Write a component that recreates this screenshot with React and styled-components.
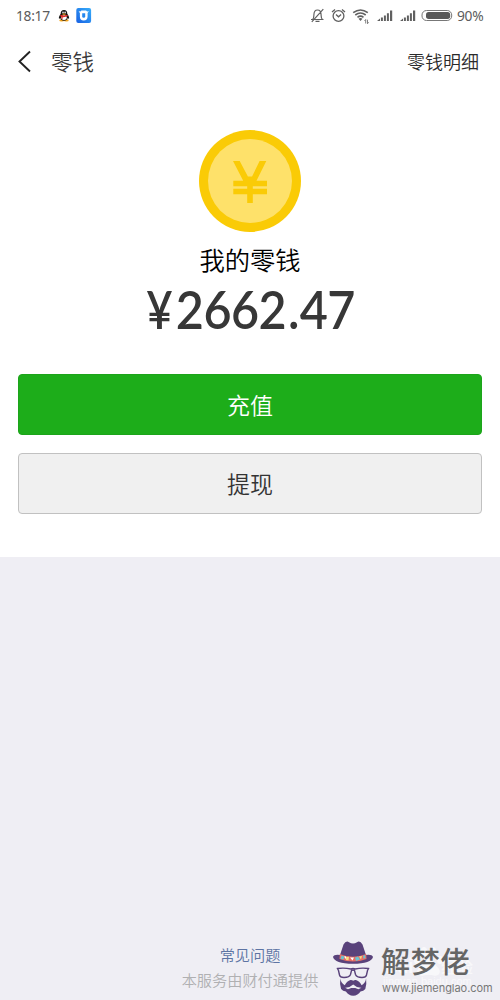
import React from 'react';
import styled, { createGlobalStyle } from 'styled-components';

const Global = createGlobalStyle`
  * { box-sizing: border-box; }
  body { margin: 0; background: #efeef4; font-family: "Noto Sans", "Noto Sans CJK SC", sans-serif; }
`;

const Screen = styled.div`
  width: 500px;
  height: 1000px;
  display: flex;
  flex-direction: column;
  overflow: hidden;
  position: relative;
  background: #efeef4;
`;

const StatusBar = styled.header`
  height: 31px;
  flex: none;
  display: flex;
  align-items: center;
  justify-content: space-between;
  padding: 0 16px;
  background: #fff;
  color: #5c5c5c;
`;

const StatusGroup = styled.div`
  display: flex;
  align-items: center;
  height: 31px;
`;

const StatusText = styled.span`
  font: 400 ${(p) => p.$size}px/31px "Noto Sans", sans-serif;
  margin-left: ${(p) => p.$gap || 0}px;
  letter-spacing: -0.3px;
  width: ${(p) => p.$width}px;
  white-space: nowrap;
`;

const Glyph = styled.svg`
  display: block;
  flex: none;
  margin-left: ${(p) => p.$gap || 0}px;
`;

const NavBar = styled.nav`
  height: 61px;
  flex: none;
  display: flex;
  align-items: center;
  padding: 0 21px 0 16px;
  background: #fff;
`;

const NavTitle = styled.h1`
  margin: 0 auto 0 18px;
  padding-bottom: 2px;
  font: 350 21.5px/59px "Noto Sans CJK SC", sans-serif;
  color: #3a3a3a;
`;

const NavLink = styled.span`
  font: 350 18px/59px "Noto Sans CJK SC", sans-serif;
  color: #2a2a2a;
`;

const Wallet = styled.main`
  height: 465px;
  flex: none;
  display: flex;
  flex-direction: column;
  align-items: center;
  padding: 38px 18px 0;
  background: #fff;
`;

const Label = styled.div`
  margin-top: 8px;
  font: 350 25.3px/38px "Noto Sans CJK SC", sans-serif;
  color: #000;
`;

const Amount = styled.div`
  height: 60px;
  margin-top: 2px;
  padding-left: 1px;
  display: flex;
  font: 600 51px/60px Lato, sans-serif;
  letter-spacing: -0.6px;
  transform: scaleX(0.95);
  color: #373737;
  white-space: nowrap;
`;

const Currency = styled.span`
  transform: scaleX(0.94);
  margin-right: 3px;
`;

const Point = styled.span`
  margin: 0 1px 0 2px;
`;

const Button = styled.button`
  width: 464px;
  height: 61px;
  flex: none;
  margin: ${(p) => (p.$primary ? '34px' : '18px')} 0 0;
  padding: 0 0 2px;
  border: ${(p) => (p.$primary ? '1px solid #1da41b' : '1.5px solid #c1c1c1')};
  border-radius: 4px;
  background: ${(p) => (p.$primary ? '#1dad1a' : '#f0f0f0')};
  color: ${(p) => (p.$primary ? '#fff' : '#333')};
  font: 350 23px/34px "Noto Sans CJK SC", sans-serif;
`;

const Footer = styled.footer`
  margin-top: auto;
  padding-bottom: 8px;
  display: flex;
  flex-direction: column;
  align-items: center;
  font: 350 15.2px/25px "Noto Sans CJK SC", sans-serif;
  color: #b0b0b2;
`;

const HelpLink = styled.a`
  color: #5d74a3;
`;

const Watermark = styled.aside`
  position: absolute;
  left: 332px;
  top: 940px;
  display: flex;
  width: 166px;
  height: 58px;
`;

const GhostMark = styled.svg`
  position: absolute;
  left: 50px;
  top: 5px;
`;

const Brand = styled.div`
  position: relative;
  margin-left: 7px;
  color: #656565;
`;

const BrandName = styled.div`
  font: 500 29px/41px "Noto Sans CJK SC", sans-serif;
  letter-spacing: 0.7px;
  height: 41px;
  white-space: nowrap;
`;

const BrandUrl = styled.div`
  padding-left: 1px;
  font: 400 11px/14px Inter, sans-serif;
  letter-spacing: -0.05px;
  color: #777;
`;

function PenguinIcon() {
  return (
    <Glyph $gap={8} width="12" height="13" viewBox="0 0 13 14">
      <ellipse cx="4" cy="12.3" rx="2.6" ry="1.2" fill="#f6a51b" />
      <ellipse cx="9" cy="12.3" rx="2.6" ry="1.2" fill="#f6a51b" />
      <path d="M6.5 1C4 1 2.9 2.8 2.9 5 1.800 6.500.6 8.600 1 10.300c.4.500 1-.3 1.400-.6.500 1.900 2 2.900 4.100 2.900s3.600-1 4.100-2.900c.4.300 1 1.100 1.400.6.4-1.700-.8-3.800-1.900-5.300 0-2.200-1.100-4-3.600-4z" fill="#151515" />
      <ellipse cx="6.500" cy="9.300" rx="3" ry="2.700" fill="#fff" />
      <ellipse cx="5.400" cy="3.700" rx=".8" ry="1.100" fill="#fff" />
      <ellipse cx="7.700" cy="3.700" rx=".8" ry="1.100" fill="#fff" />
      <ellipse cx="6.500" cy="5.500" rx="2" ry=".6" fill="#f6a51b" />
      <path d="M2.700 6.300q3.800 1.800 7.600 0l.3 1.300q-3 1.500-5.500 1.100v1.700H3.700V8.300l-1.300-.7z" fill="#e62a22" />
    </Glyph>
  );
}

function AppIcon() {
  return (
    <Glyph $gap={6} width="16" height="16" viewBox="0 0 16 16">
      <defs>
        <linearGradient id="app" x1="0" y1="1" x2="1" y2="0">
          <stop stopColor="#1761e3" />
          <stop offset="1" stopColor="#37adfa" />
        </linearGradient>
      </defs>
      <rect x=".3" y=".1" width="14.800" height="14.800" rx="2" fill="url(#app)" />
      <path d="M2.600 3.300l1.800.2 1-.9h4.700l1 .9 1.800-.2-1.300 1.600v3.700q0 3.900-3.900 3.900T3.900 8.600V4.900z" fill="#fff" />
      <path d="M6.200 5.200h3v3.200q0 1.400-1.500 1.400T6.200 8.400z" fill="#2588ee" />
    </Glyph>
  );
}

function MutedBellIcon() {
  return (
    <Glyph width="15" height="16" viewBox="0 0 15 16" fill="none" stroke="#606060" strokeWidth="1.200">
      <path d="M1 11.500h12.500M2.700 11.300c1.200-1 1.100-2.300 1.200-4.600C4 3.800 5.200 2 7.500 2s3.500 1.800 3.600 4.700c.1 2.300 0 3.600 1.200 4.600M5.500 13.300h4M13.300 1.200L1.800 13.900" />
    </Glyph>
  );
}

function AlarmIcon() {
  return (
    <Glyph $gap={6} width="15" height="16" viewBox="0 0 15 16" fill="none" stroke="#606060" strokeWidth="1.300">
      <circle cx="7.500" cy="8" r="5.400" />
      <path d="M5 6.500l2.500 2.300 2.600-2.300M1 4l3-2.500M14 4l-3-2.500" />
    </Glyph>
  );
}

function WifiIcon() {
  return (
    <Glyph $gap={6} width="18" height="18" viewBox="0 0 18 18" fill="none" stroke="#606060" strokeWidth="1.600">
      <path d="M1.200 5.700q7.300-5.400 14.600 0M3.300 8q5.200-4.100 10.400 0M5.500 10.300q3-2.400 6 0" />
      <path d="M6.500 11.700q2-1.300 4 0l-2 2.200z" fill="#606060" stroke="none" />
      <path d="M13.700 16.500v-4l-1.200 1.400M15.500 12.700v4l1.200-1.400" strokeWidth=".8" />
    </Glyph>
  );
}

function SignalIcon({ gap }) {
  return (
    <Glyph $gap={gap} width="16" height="12" viewBox="0 0 16 12" fill="#606060">
      <path d="M0 11l3-2.600V11zM3.900 7.600h2V11h-2zM6.900 5.400h2V11h-2zM9.900 3.200h2V11h-2zM13 .4h2.200V11H13z" />
    </Glyph>
  );
}

function BatteryIcon() {
  return (
    <Glyph $gap={5} width="32" height="12" viewBox="0 0 32 12">
      <rect x="1" y=".5" width="29.700" height="10" rx="4.500" fill="#fff" stroke="#777" />
      <rect x="5" y="2" width="24.200" height="7" rx="2.700" fill="#585858" />
    </Glyph>
  );
}

function Coin() {
  return (
    <Glyph width="102" height="102" viewBox="0 0 102 102">
      <circle cx="51" cy="51" r="51" fill="#facb06" />
      <circle cx="51" cy="51" r="42" fill="#fee16a" />
      <path d="M34 31h6.700l8.200 15.500h4.200L60.600 31h6.700L57.500 50.700H68v5.600H53.800v2.500H68v5.400H53.800V73h-5.600v-8.800H34.300v-5.400h13.900v-2.500H34.300v-5.600h9.900z" fill="#facb06" />
    </Glyph>
  );
}

function GentlemanLogo() {
  return (
    <Glyph width="42" height="56" viewBox="0 0 42 56">
      <path d="M8 15L11.500 4.500Q14 .3 17 2.200q4 2.500 8 0 3-1.900 5.500 2.300L34 15q6-.8 7 2-1.500 6.500-20 6.800Q2.500 23.500 1 17q1-2.800 7-2z" fill="#59427b" />
      <path d="M7.800 14q13 5.600 26.400 0l.3 5q-13.300 5-27 0z" fill="#e66d65" />
      <path d="M9.500 15.500l3 1-1 3-3-.4zM23 17.500l3-1 2 3-4 1.500zM31 15.700l2-.7.500 3-2 .7z" fill="#69c3cf" />
      <path d="M14 17l3-.2-.5 3.500-2.500-.3zM27 16.500l3-.6-1 3.500z" fill="#f6dd82" />
      <path d="M18 17.500l4 .1-1.500 3zM12 16.500l2-.3v3z" fill="#fff" />
      <path d="M5.500 28.500q7-1 13.300.5 2.200-1 4.400 0 6.300-1.500 13.300-.5l-1 2-1 4.500q-.5 2.500-4.500 2.500-5.500 0-6.500-3l-1-4q-1.500-.7-3 0l-1 4q-1 3-6.500 3-4 0-4.500-2.500l-1-4.500z" fill="none" stroke="#59427b" strokeWidth="1.400" />
      <path d="M8.300 38.500q.7 4.700 4.500 6.800 2.200-4.500 5.700-5.300 1.500-.2 2.700.8 1.200-1 2.700-.8 3.500.8 5.700 5.300 3.800-2.100 4.500-6.800.8 5.500-.8 10.500-1.700 2-4.800 2.500-2.500 4-7.300 4.300-4.800-.3-7.300-4.300-3.100-.5-4.800-2.500-1.600-5-.8-10.500z" fill="#59427b" />
      <path d="M13 47.800q4.500.2 8.200-3.300 3.700 3.500 8.200 3.300l-3 1.500-3.200-1.300h-4l-3.200 1.300z" fill="#efeef4" />
    </Glyph>
  );
}

function PawMark() {
  return (
    <GhostMark width="112" height="50" viewBox="0 0 112 50" fill="#fff" opacity=".6">
      <text x="3" y="28" fontFamily="Lato" fontWeight="700" fontSize="20">Bai</text>
      <ellipse cx="42" cy="7" rx="3.500" ry="5" />
      <ellipse cx="51" cy="7" rx="3.500" ry="5" />
      <ellipse cx="35" cy="15" rx="3" ry="4" />
      <ellipse cx="58" cy="15" rx="3" ry="4" />
      <path d="M46.500 14c4 0 5 5 9 8 5 5 1 10-4 8.500-3-1-7-1-10 0-5 1.500-9-3.500-4-8.500 4-3 5-8 9-8z" />
      <text x="59" y="28" fontFamily="Noto Sans CJK SC" fontWeight="500" fontSize="16">经验</text>
      <text x="1" y="40" fontFamily="Liberation Sans" fontSize="11">jingyan.baidu.com</text>
    </GhostMark>
  );
}

export default function App() {
  return (
    <Screen>
      <Global />
      <StatusBar>
        <StatusGroup>
          <StatusText $width={34} $size={13.8}>18:17</StatusText>
          <PenguinIcon />
          <AppIcon />
        </StatusGroup>
        <StatusGroup>
          <MutedBellIcon />
          <AlarmIcon />
          <WifiIcon />
          <SignalIcon gap={7} />
          <SignalIcon gap={7} />
          <BatteryIcon />
          <StatusText $width={27} $gap={4} $size={13.8}>90%</StatusText>
        </StatusGroup>
      </StatusBar>
      <NavBar>
        <Glyph width="17" height="24" viewBox="0 0 17 24" fill="none" stroke="#222" strokeWidth="1.900">
          <path d="M14 1.500L3.500 11.500 14 21.500" />
        </Glyph>
        <NavTitle>零钱</NavTitle>
        <NavLink>零钱明细</NavLink>
      </NavBar>
      <Wallet>
        <Coin />
        <Label>我的零钱</Label>
        <Amount>
          <Currency>¥</Currency>
          <span>2662</span>
          <Point>.</Point>
          <span>47</span>
        </Amount>
        <Button $primary>充值</Button>
        <Button>提现</Button>
      </Wallet>
      <Footer>
        <HelpLink>常见问题</HelpLink>
        <span>本服务由财付通提供</span>
      </Footer>
      <Watermark>
        <PawMark />
        <GentlemanLogo />
        <Brand>
          <BrandName>解梦佬</BrandName>
          <BrandUrl>www.jiemenglao.com</BrandUrl>
        </Brand>
      </Watermark>
    </Screen>
  );
}
